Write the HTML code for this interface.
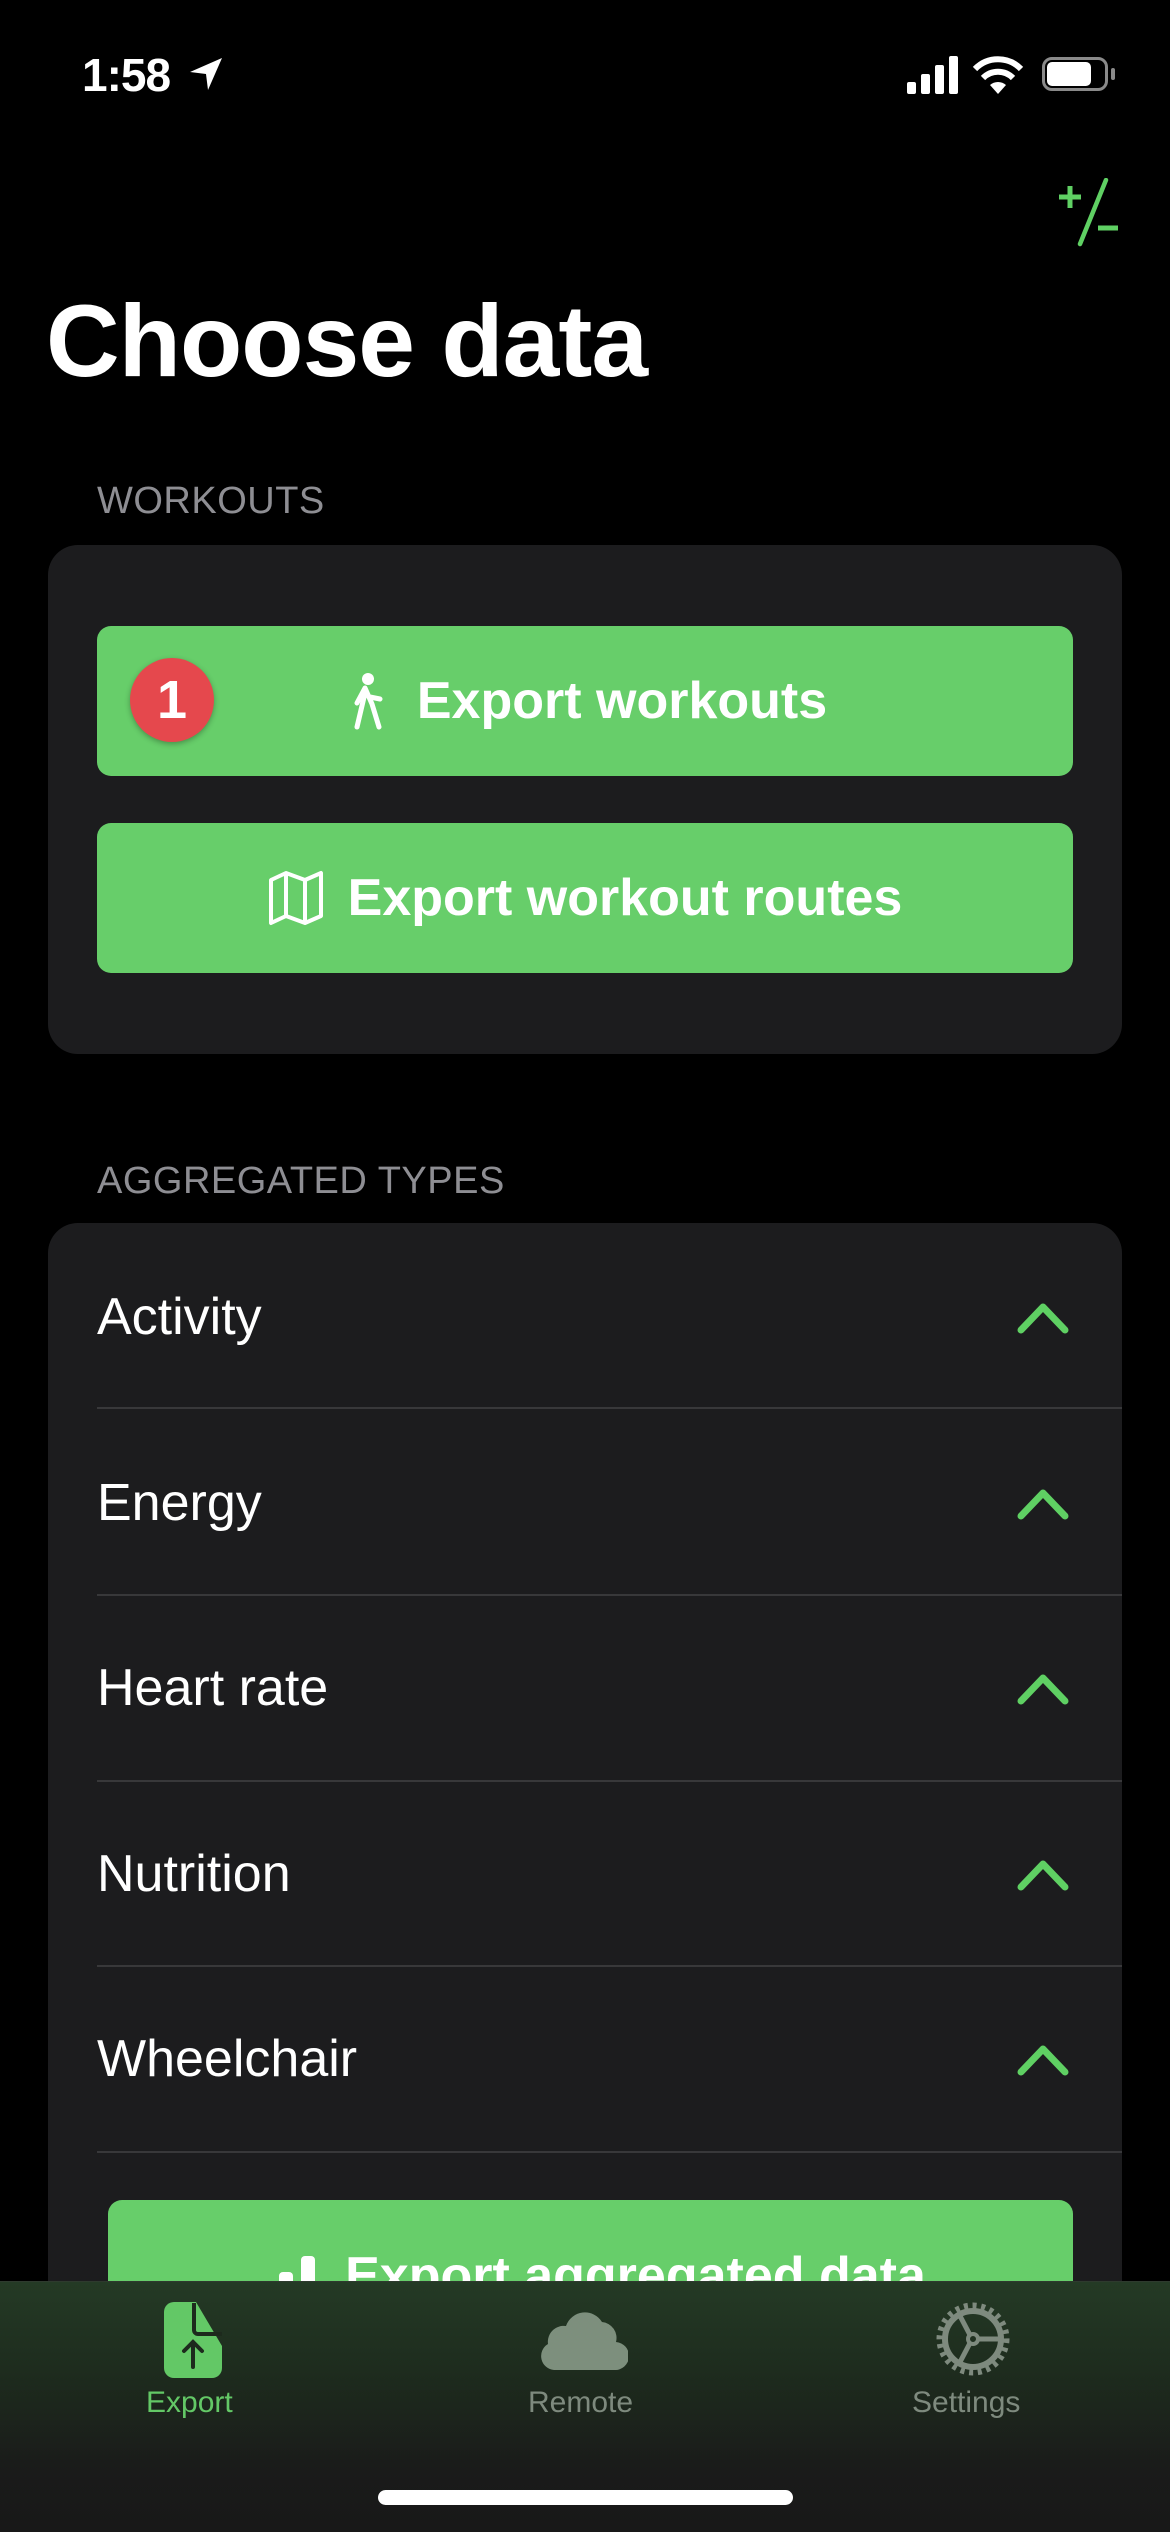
<!DOCTYPE html>
<html><head><meta charset="utf-8"><style>
*{margin:0;padding:0;box-sizing:border-box}
html{width:1170px;height:2532px;overflow:hidden;background:#000}
body{width:1170px;height:2532px;background:#000;position:relative;overflow:hidden;font-family:"Liberation Sans",sans-serif;color:#fff}
.abs{position:absolute}
.card{position:absolute;left:48px;width:1074px;background:#1c1c1e;border-radius:30px}
.btn{position:absolute;left:97px;width:976px;height:150px;background:#67ce6a;border-radius:14px;color:#fff;font-weight:bold;font-size:52px;display:flex;align-items:center;justify-content:center}
.hdr{position:absolute;left:97px;font-size:38px;color:#8e8e93;letter-spacing:0.5px}
.row{position:absolute;left:97px;font-size:52px;color:#fff}
.sep{position:absolute;left:97px;width:1025px;height:2px;background:#38383a}
.chev{position:absolute;left:1017px}
</style></head><body>
<!-- status bar -->
<div class="abs" style="left:82px;top:48px;font-size:46px;font-weight:bold;letter-spacing:-1px">1:58</div>
<svg class="abs" style="left:188px;top:56px" width="36" height="36" viewBox="0 0 36 36"><path d="M34 2 L2 16 L18 18 L20 34 Z" fill="#fff"/></svg>
<svg class="abs" style="left:907px;top:56px" width="52" height="38" viewBox="0 0 52 38"><rect x="0" y="26" width="9" height="12" rx="2" fill="#fff"/><rect x="14" y="18" width="9" height="20" rx="2" fill="#fff"/><rect x="28" y="9" width="9" height="29" rx="2" fill="#fff"/><rect x="42" y="0" width="9" height="38" rx="2" fill="#fff"/></svg>
<svg class="abs" style="left:972px;top:54px" width="52" height="40" viewBox="0 0 52 40"><path d="M26 40 L18 31 A12 12 0 0 1 34 31 Z" fill="#fff"/><path d="M11 24 A21 21 0 0 1 41 24" stroke="#fff" stroke-width="6" fill="none"/><path d="M3 15 A32 32 0 0 1 49 15" stroke="#fff" stroke-width="6" fill="none"/></svg>
<div class="abs" style="left:1042px;top:57px;width:66px;height:34px;border:3px solid #8a8a8a;border-radius:10px"></div>
<div class="abs" style="left:1047px;top:62px;width:44px;height:24px;background:#fff;border-radius:5px"></div>
<div class="abs" style="left:1111px;top:68px;width:4px;height:12px;background:#8a8a8a;border-radius:2px"></div>
<!-- +/- -->
<svg class="abs" style="left:1058px;top:178px" width="70" height="70" viewBox="0 0 70 70"><path d="M12 8 V30 M1 19 H23" stroke="#5fd063" stroke-width="5"/><path d="M48 2 L22 66" stroke="#5fd063" stroke-width="4.5" stroke-linecap="round"/><path d="M40 50 H60" stroke="#5fd063" stroke-width="5"/></svg>
<div class="abs" style="left:46px;top:283px;font-size:102px;font-weight:bold;letter-spacing:-1px">Choose data</div>
<div class="hdr" style="top:480px">WORKOUTS</div>
<div class="card" style="top:545px;height:509px"></div>
<div class="btn" style="top:626px"><svg width="50" height="60" viewBox="0 0 50 60" style="margin-right:24px"><circle cx="25" cy="8" r="6" fill="#fff"/><path d="M22 17 L14 32 M22 17 L29 33 L36 56 M22 22 L14 56 M27 26 L37 28" stroke="#fff" stroke-width="5" stroke-linecap="round" fill="none"/></svg>Export workouts</div>
<div class="abs" style="left:130px;top:658px;width:84px;height:84px;border-radius:50%;background:#e5484d;color:#fff;font-weight:bold;font-size:54px;text-align:center;line-height:84px;box-shadow:0 2px 6px rgba(0,0,0,.3)">1</div>
<div class="btn" style="top:823px"><svg width="56" height="56" viewBox="0 0 56 56" style="margin-right:24px"><path d="M3 10 L18 3 L37 10 L53 3 V46 L37 53 L18 46 L3 53 Z M18 3 V46 M37 10 V53" stroke="#fff" stroke-width="4" fill="none" stroke-linejoin="round"/></svg>Export workout routes</div>
<div class="hdr" style="top:1160px">AGGREGATED TYPES</div>
<div class="card" style="top:1223px;height:1309px;border-bottom-left-radius:0;border-bottom-right-radius:0"></div>
<div class="row" style="top:1287px">Activity</div>
<div class="sep" style="top:1407px"></div>
<div class="row" style="top:1473px">Energy</div>
<div class="sep" style="top:1594px"></div>
<div class="row" style="top:1658px">Heart rate</div>
<div class="sep" style="top:1780px"></div>
<div class="row" style="top:1844px">Nutrition</div>
<div class="sep" style="top:1965px"></div>
<div class="row" style="top:2029px">Wheelchair</div>
<div class="sep" style="top:2151px"></div>
<svg class="chev" style="top:1302px" width="52" height="32" viewBox="0 0 52 32"><path d="M4 28 L26 5 L48 28" stroke="#5fd063" stroke-width="7" fill="none" stroke-linecap="round" stroke-linejoin="round"/></svg>
<svg class="chev" style="top:1488px" width="52" height="32" viewBox="0 0 52 32"><path d="M4 28 L26 5 L48 28" stroke="#5fd063" stroke-width="7" fill="none" stroke-linecap="round" stroke-linejoin="round"/></svg>
<svg class="chev" style="top:1673px" width="52" height="32" viewBox="0 0 52 32"><path d="M4 28 L26 5 L48 28" stroke="#5fd063" stroke-width="7" fill="none" stroke-linecap="round" stroke-linejoin="round"/></svg>
<svg class="chev" style="top:1859px" width="52" height="32" viewBox="0 0 52 32"><path d="M4 28 L26 5 L48 28" stroke="#5fd063" stroke-width="7" fill="none" stroke-linecap="round" stroke-linejoin="round"/></svg>
<svg class="chev" style="top:2044px" width="52" height="32" viewBox="0 0 52 32"><path d="M4 28 L26 5 L48 28" stroke="#5fd063" stroke-width="7" fill="none" stroke-linecap="round" stroke-linejoin="round"/></svg>
<div class="btn" style="top:2200px;left:108px;width:965px;height:150px;align-items:flex-start;padding-top:46px"><svg width="64" height="60" viewBox="0 0 64 60" style="margin-right:26px;margin-top:6px"><rect x="2" y="34" width="14" height="26" rx="4" fill="#fff"/><rect x="24" y="20" width="14" height="40" rx="4" fill="#fff"/><rect x="46" y="4" width="14" height="56" rx="4" fill="#fff"/></svg>Export aggregated data</div>
<!-- tab bar -->
<div class="abs" style="left:0;top:2281px;width:1170px;height:251px;background:linear-gradient(180deg,#243a25 0%,#1d2a1d 40%,#1a1b1a 75%,#181818 100%);border-top:1px solid #2e3a2e"></div>
<svg class="abs" style="left:164px;top:2302px" width="62" height="76" viewBox="0 0 62 76"><path d="M10 0 H32 L58 44 V66 A10 10 0 0 1 48 76 H10 A10 10 0 0 1 0 66 V10 A10 10 0 0 1 10 0 Z" fill="#63c866"/><path d="M30 1 V28 A4 4 0 0 0 34 32 H58" stroke="#1d2a1d" stroke-width="4" fill="none"/><path d="M29 65 V40 M20 49 L29 40 L38 49" stroke="#1d2a1d" stroke-width="4" fill="none" stroke-linecap="round"/></svg>
<div class="abs" style="left:146px;top:2386px;font-size:30px;color:#63c866">Export</div>
<svg class="abs" style="left:540px;top:2300px" width="88" height="70" viewBox="0 0 88 70"><path d="M14 70 A14 14 0 0 1 8 44 A16 16 0 0 1 26 26 A20 20 0 0 1 62 22 A16 16 0 0 1 76 42 A14 14 0 0 1 74 70 Z" fill="#7d8f7d"/></svg>
<div class="abs" style="left:528px;top:2386px;font-size:30px;color:#7e8a7e">Remote</div>
<svg class="abs" style="left:934px;top:2300px" width="78" height="78" viewBox="0 0 78 78"><g stroke="#7e8a7e" fill="none"><circle cx="39" cy="39" r="28" stroke-width="6"/><circle cx="39" cy="39" r="33" stroke-width="7" stroke-dasharray="4 4.6"/><circle cx="39" cy="39" r="5" stroke-width="4"/><path d="M44 39 H67 M36 35 L25 14 M36 43 L25 64" stroke-width="5"/></g></svg>
<div class="abs" style="left:912px;top:2386px;font-size:30px;color:#7e8a7e">Settings</div>
<div class="abs" style="left:378px;top:2490px;width:415px;height:15px;background:#fff;border-radius:8px"></div>
</body></html>
